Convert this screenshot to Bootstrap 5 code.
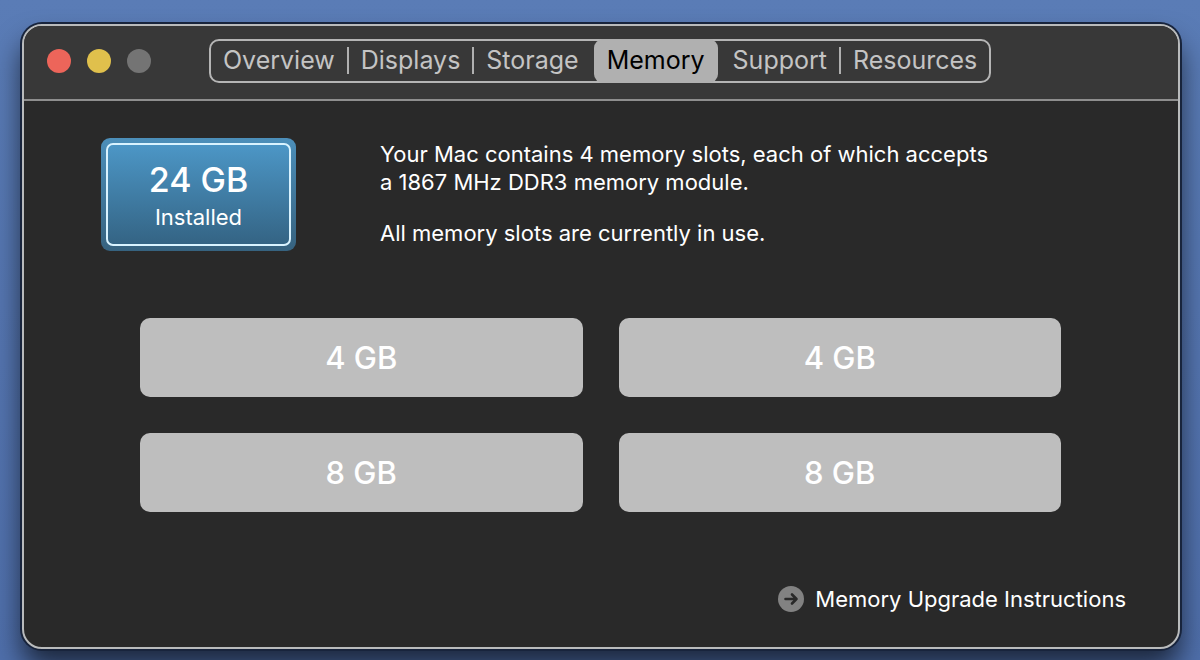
<!DOCTYPE html>
<html lang="en">
<head>
<meta charset="utf-8">
<meta name="viewport" content="width=device-width, initial-scale=1">
<title>About This Mac</title>
<link href="https://cdn.jsdelivr.net/npm/bootstrap@5.3.0/dist/css/bootstrap.min.css" rel="stylesheet">
<style>
  body {
    font-family: Inter, "Liberation Sans", sans-serif;
    font-size: 22px;
    line-height: 28px;
    color: #fff;
    background: linear-gradient(#5a7cb6, #4f6fab);
    padding: 24px 20px 12px 22px;
  }
  .mac-window {
    background: #292929;
    border: 2px solid #b9bbbc;
    border-radius: 20px;
    box-shadow: 0 0 0 2px #18243c, 0 18px 28px rgba(0, 0, 0, .65);
  }
  .title-bar {
    background: #383838;
    border-bottom: 2px solid #8e8e8e;
    height: 75px;
    padding: 0 23px 3px;
  }
  .light { width: 24px; height: 24px; border: 0; padding: 0; border-radius: 50%; }
  .light-close { background: #ed655a; }
  .light-min { background: #e0c04c; }
  .light-zoom { background: #747474; }
  .segments {
    height: 44px;
    border: 2px solid #b5b5b5;
    border-radius: 10px;
    margin-left: 58px;
  }
  .segment {
    position: relative;
    height: 44px;
    margin: -2px 0;
    padding: 0 12px 2px;
    border: 0;
    background: none;
    color: #c4c4c4;
    font-size: 25px;
  }
  .segment.ruled { border-right: 2px solid transparent; border-image: linear-gradient(transparent 8px, #b0b0b0 8px, #b0b0b0 35px, transparent 35px) 0 2 0 0; }
  .segment.active { margin: -2px 3px; padding: 0 13px 2px; background: #b0b0b0; color: #000; border-radius: 9px; }
  .content-area { padding: 37px 52px 34px 77px; }
  .total {
    width: 195px;
    padding: 5px;
    border-radius: 9px;
    background: linear-gradient(#4c8fba, #36627f);
  }
  .total-inner {
    height: 103px;
    padding-bottom: 2px;
    border: 2px solid #d9f3ff;
    border-radius: 7px;
    background: linear-gradient(#4c96c6, #346484);
  }
  .total-size { font-size: 34px; font-weight: 500; line-height: 46px; }
  .summary { margin-left: 84px; padding-top: 2px; max-width: 620px; }
  .summary p { margin-bottom: 23px; }
  .slots { gap: 36px; grid-template-columns: 1fr 1fr; margin: 67px 65px 0 39px; }
  .slot { height: 79px; border-radius: 10px; background: #bebebe; font-size: 31px; font-weight: 500; }
  .upgrade { margin-top: 73px; gap: 11px; }
</style>
</head>
<body>
<main class="mac-window overflow-hidden">
  <header class="title-bar d-flex align-items-center">
    <div class="d-flex gap-3">
      <button type="button" class="light light-close" aria-label="Close"></button>
      <button type="button" class="light light-min" aria-label="Minimize"></button>
      <button type="button" class="light light-zoom" aria-label="Zoom" disabled></button>
    </div>
    <nav class="segments d-flex align-items-stretch" aria-label="Sections">
      <button type="button" class="segment ruled">Overview</button>
      <button type="button" class="segment ruled">Displays</button>
      <button type="button" class="segment">Storage</button>
      <button type="button" class="segment active" aria-current="page">Memory</button>
      <button type="button" class="segment ruled">Support</button>
      <button type="button" class="segment">Resources</button>
    </nav>
  </header>
  <div class="content-area">
    <section class="d-flex align-items-start">
      <div class="total flex-shrink-0 text-center">
        <div class="total-inner d-flex flex-column justify-content-center">
          <div class="total-size">24 GB</div>
          <div>Installed</div>
        </div>
      </div>
      <div class="summary">
        <p>Your Mac contains 4 memory slots, each of which accepts a 1867 MHz DDR3 memory module.</p>
        <p class="mb-0">All memory slots are currently in use.</p>
      </div>
    </section>
    <section class="slots d-grid" aria-label="Memory slots">
      <div class="slot d-flex align-items-center justify-content-center">4 GB</div>
      <div class="slot d-flex align-items-center justify-content-center">4 GB</div>
      <div class="slot d-flex align-items-center justify-content-center">8 GB</div>
      <div class="slot d-flex align-items-center justify-content-center">8 GB</div>
    </section>
    <div class="d-flex justify-content-end">
      <a href="#" class="upgrade d-flex align-items-center text-white text-decoration-none">
        <svg width="26" height="26" viewBox="0 0 26 26" fill="none" aria-hidden="true">
          <circle cx="13" cy="13" r="13" fill="#828282"/>
          <path d="M7.500 13h11M14 8.500l4.500 4.500-4.500 4.500" stroke="#292929" stroke-width="2.600" stroke-linecap="round" stroke-linejoin="round"/>
        </svg>
        Memory Upgrade Instructions
      </a>
    </div>
  </div>
</main>
<script src="https://cdn.jsdelivr.net/npm/bootstrap@5.3.0/dist/js/bootstrap.bundle.min.js"></script>
</body>
</html>
